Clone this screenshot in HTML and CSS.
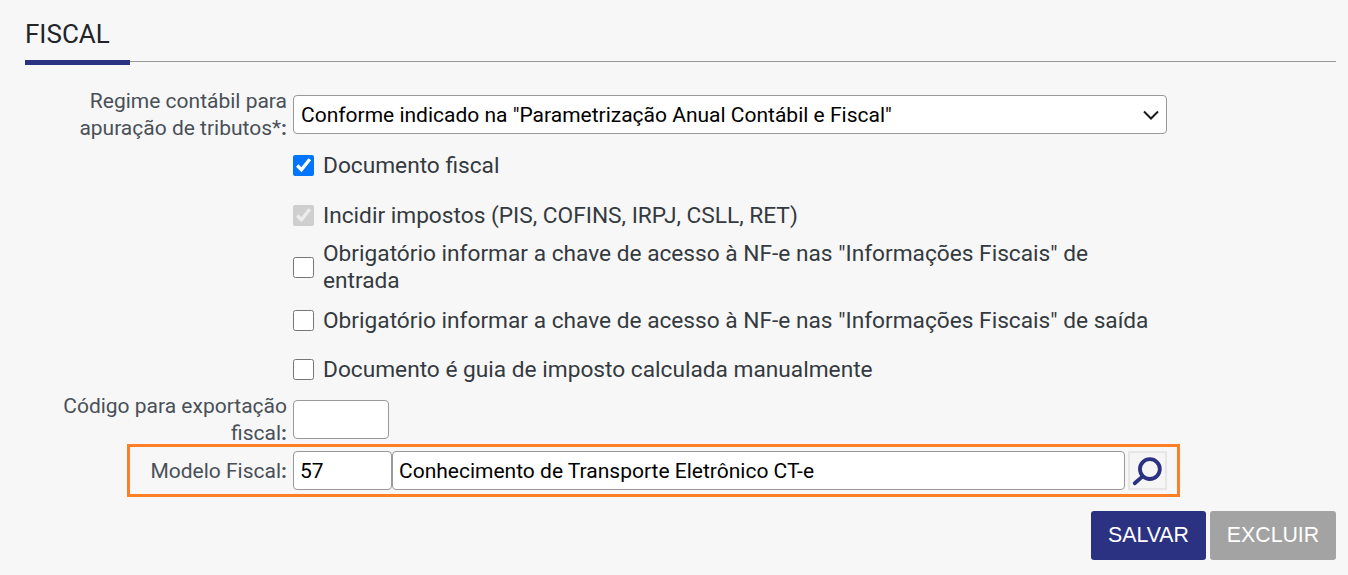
FILE: index.html
```html
<!DOCTYPE html>
<html lang="pt-BR">
<head>
<meta charset="utf-8">
<title>Fiscal</title>
<link rel="stylesheet" href="styles.css">
</head>
<body>
<main class="page">
  <h2 class="section-title"><span>FISCAL</span></h2>
  <form class="form">
    <div class="row row-select">
      <label class="label"><span class="line">Regime contábil para</span><span class="line">apuração de tributos*<b>:</b></span></label>
      <div class="select">
        <span>Conforme indicado na "Parametrização Anual Contábil e Fiscal"</span>
        <svg class="chevron" width="16" height="10" viewBox="0 0 16 10"><path d="M1 1.500 8 8.500l7-7" fill="none" stroke="#1a1a1a" stroke-width="2"/></svg>
      </div>
    </div>
    <label class="check check-doc"><input type="checkbox" checked><span>Documento fiscal</span></label>
    <label class="check check-inc"><input type="checkbox" checked disabled><span>Incidir impostos (PIS, COFINS, IRPJ, CSLL, RET)</span></label>
    <label class="check check-ent"><input type="checkbox"><span>Obrigatório informar a chave de acesso à NF-e nas "Informações Fiscais" de entrada</span></label>
    <label class="check check-sai"><input type="checkbox"><span>Obrigatório informar a chave de acesso à NF-e nas "Informações Fiscais" de saída</span></label>
    <label class="check check-guia"><input type="checkbox"><span>Documento é guia de imposto calculada manualmente</span></label>
    <div class="row row-code">
      <label class="label"><span class="line">Código para exportação</span><span class="line">fiscal<b>:</b></span></label>
      <input class="input input-code" type="text">
    </div>
    <div class="row row-model">
      <label class="label">Modelo Fiscal<b>:</b></label>
      <div class="model-fields">
        <input class="input input-num" type="text" value="57">
        <input class="input input-desc" type="text" value="Conhecimento de Transporte Eletrônico CT-e">
        <button class="lookup" type="button" aria-label="Pesquisar">
          <svg width="37" height="37" viewBox="0 0 37 37"><circle cx="21" cy="17" r="10.500" fill="none" stroke="#2b3282" stroke-width="4"/><path d="M13 25 5 32" stroke="#2b3282" stroke-width="4" stroke-linecap="round"/></svg>
        </button>
      </div>
    </div>
    <div class="actions">
      <button class="btn btn-save" type="button">SALVAR</button>
      <button class="btn btn-del" type="button">EXCLUIR</button>
    </div>
  </form>
</main>
</body>
</html>
```
FILE: styles.css
```css
* { box-sizing: border-box; }
html, body { margin: 0; height: 100%; }
body {
  background: #f7f7f7;
  font-family: Roboto, "Liberation Sans", sans-serif;
  overflow: hidden;
}
.page { padding: 0 12px 0 25px; }
.section-title {
  margin: 0;
  height: 62px;
  padding-top: 20px;
  border-bottom: 1px solid #999;
  font-size: 26px;
  font-weight: 400;
  line-height: 28px;
  color: #212529;
}
.section-title span {
  display: block;
  width: 105px;
  height: 45px;
  border-bottom: 5px solid #2b3282;
}
.form { padding-top: 33px; }
.row { display: flex; align-items: flex-start; gap: 6px; }
.label {
  width: 262px;
  flex: none;
  text-align: right;
  font-size: 21px;
  line-height: 27px;
  color: #495057;
  margin-top: -7px;
}
.line { display: block; }
.select {
  width: 874px;
  height: 39px;
  display: flex;
  align-items: center;
  justify-content: space-between;
  padding: 0 7px;
  background: #fff;
  border: 1px solid #999;
  border-radius: 4px;
  font-size: 21px;
  color: #000;
}
.check {
  display: flex;
  align-items: center;
  gap: 9px;
  width: 874px;
  margin-left: 268px;
  font-size: 22.700px;
  line-height: 27px;
  color: #343a40;
}
.check input {
  flex: none;
  width: 21px;
  height: 21px;
  margin: 0;
}
.check-doc { margin-top: 10px; }
.check-inc { margin-top: 23px; }
.check-ent { margin-top: 11px; }
.check-sai { margin-top: 13px; }
.check-guia { margin-top: 22px; }
.row-code { margin-top: 17px; }
.input {
  height: 39px;
  background: #fff;
  border: 1px solid #999;
  border-radius: 4px;
  padding: 0 6px;
  font: 21px Roboto, "Liberation Sans", sans-serif;
  color: #000;
}
.input-code { width: 96px; }
.row-model { margin-top: 4px; position: relative; }
.row-model .label { margin-top: 7px; }
.row-model::after {
  content: "";
  box-sizing: border-box;
  position: absolute;
  left: 102px;
  top: -7px;
  width: 1053px;
  height: 53px;
  border: 3px solid #ff7f27;
  pointer-events: none;
}
.model-fields { display: flex; align-items: flex-start; width: 874px; }
.input-num { width: 99px; }
.input-desc { width: 734px; }
.lookup {
  width: 39px;
  height: 39px;
  margin-left: 3px;
  padding: 0;
  border: 2px solid #e6e6e6;
  background: #f5f5f5;
  display: flex;
  align-items: center;
  justify-content: center;
}
.actions {
  display: flex;
  justify-content: flex-end;
  gap: 4px;
  margin-top: 21px;
}
.btn {
  height: 49px;
  border: 0;
  border-radius: 3px;
  color: #fff;
  font: 21.300px "Liberation Sans", Arial, sans-serif;
  padding: 0;
}
.btn-save { width: 115px; background: #2b3282; }
.btn-del { width: 126px; background: #a3a3a3; }
```
